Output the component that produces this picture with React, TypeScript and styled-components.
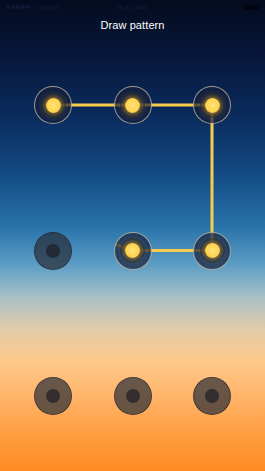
import React from "react";
import styled, { createGlobalStyle } from "styled-components";

const Global = createGlobalStyle`
  html, body { margin: 0; padding: 0; }
  body { font-family: "Liberation Sans", Arial, sans-serif; }
`;

const Screen = styled.div`
  width: 265px;
  height: 471px;
  overflow: hidden;
  display: flex;
  flex-direction: column;
  background: linear-gradient(
    180deg,
    #040b1f 0%,
    #07173a 12%,
    #0a2a5c 24%,
    #12477f 36%,
    #2872aa 48%,
    #5a9cc4 56%,
    #a8c0c6 63%,
    #e2cba8 70%,
    #ffc98a 77%,
    #ffb46a 84%,
    #ff9e42 92%,
    #ff8c22 100%
  );
`;

const StatusBar = styled.div`
  height: 14px;
  display: flex;
  align-items: center;
  justify-content: space-between;
  padding: 0 6px 0 6px;
  font-size: 8px;
  color: rgba(40, 60, 100, 0.35);
`;

const Signal = styled.div`
  display: flex;
  gap: 1px;
  align-items: center;
  width: 60px;
`;

const Dot = styled.span`
  width: 4px;
  height: 4px;
  border-radius: 50%;
  background: rgba(40, 60, 100, 0.3);
`;

const Battery = styled.div`
  width: 60px;
  display: flex;
  justify-content: flex-end;
  &::after {
    content: "";
    width: 15px;
    height: 5px;
    border-radius: 1px;
    background: rgba(0, 0, 0, 0.55);
  }
`;

const Title = styled.div`
  margin-top: 4px;
  text-align: center;
  color: #ffffff;
  font-size: 11px;
  line-height: 14px;
  letter-spacing: 0.1px;
`;

const Board = styled.div`
  position: relative;
  margin: 54px 0 0 34px;
  width: 197px;
  display: grid;
  grid-template-columns: repeat(3, 38px);
  grid-template-rows: repeat(3, 38px);
  column-gap: 41.5px;
  row-gap: 107.5px;
`;

const Lines = styled.svg`
  position: absolute;
  left: 0;
  top: 0;
  overflow: visible;
  pointer-events: none;
`;

const Node = styled.div<{ $on: boolean }>`
  position: relative;
  z-index: 1;
  width: 38px;
  height: 38px;
  box-sizing: border-box;
  border-radius: 50%;
  display: flex;
  align-items: center;
  justify-content: center;
  background: ${(p) => (p.$on ? "rgba(22, 32, 62, 0.7)" : "rgba(40, 44, 54, 0.7)")};
  border: ${(p) => (p.$on ? "1px solid rgba(255, 236, 180, 0.6)" : "1.5px solid rgba(30, 30, 34, 0.5)")};
`;

const Ring = styled.div<{ $on: boolean }>`
  width: ${(p) => (p.$on ? 25 : 14)}px;
  height: ${(p) => (p.$on ? 25 : 14)}px;
  border-radius: 50%;
  display: flex;
  align-items: center;
  justify-content: center;
  background: ${(p) => (p.$on ? "rgba(8, 16, 36, 0.5)" : "rgba(26, 28, 34, 0.68)")};
`;

const Core = styled.div`
  width: 15px;
  height: 15px;
  border-radius: 50%;
  background: radial-gradient(circle, #ffe47e 0%, #ffd24c 60%, #f6bd34 100%);
  box-shadow: 0 0 6px 2px rgba(255, 196, 60, 0.6);
`;

const active = [true, true, true, false, true, true, false, false, false];

const cx = [19, 98.5, 178];
const cy = [19, 164.5, 310];

export default function App() {
  return (
    <Screen>
      <Global />
      <StatusBar>
        <Signal>
          <Dot />
          <Dot />
          <Dot />
          <Dot />
          <Dot />
          <span style={{ marginLeft: 3 }}>Carrier</span>
        </Signal>
        <span>9:41 AM</span>
        <Battery />
      </StatusBar>
      <Title>Draw pattern</Title>
      <Board>
        <Lines width={197} height={348}>
          <polyline
            points={`${cx[0]},${cy[0]} ${cx[1]},${cy[0]} ${cx[2]},${cy[0]} ${cx[2]},${cy[1]} ${cx[1]},${cy[1]}`}
            fill="none"
            stroke="#f7cc4e"
            strokeWidth={3}
            strokeLinejoin="miter"
          />
          <line x1={cx[1]} y1={cy[1]} x2={cx[1] - 17} y2={cy[1] - 6} stroke="#f7cc4e" strokeWidth={2.5} />
        </Lines>
        {active.map((on, i) => (
          <Node key={i} $on={on}>
            <Ring $on={on}>{on && <Core />}</Ring>
          </Node>
        ))}
      </Board>
    </Screen>
  );
}
